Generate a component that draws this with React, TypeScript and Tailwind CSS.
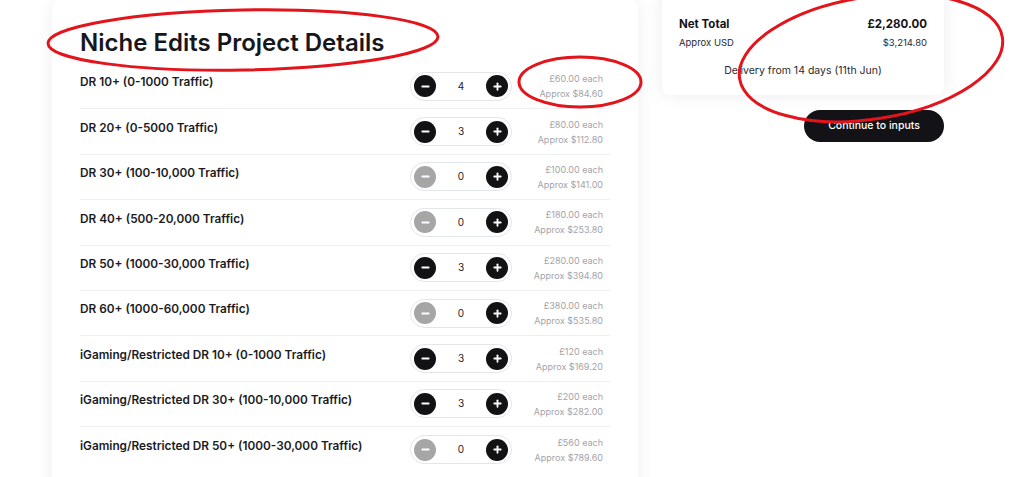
import { Minus, Plus } from "lucide-react";

type Item = {
  label: string;
  qty: number;
  each: string;
  approx: string;
};

const items: Item[] = [
  { label: "DR 10+ (0-1000 Traffic)", qty: 4, each: "£60.00 each", approx: "Approx $84.60" },
  { label: "DR 20+ (0-5000 Traffic)", qty: 3, each: "£80.00 each", approx: "Approx $112.80" },
  { label: "DR 30+ (100-10,000 Traffic)", qty: 0, each: "£100.00 each", approx: "Approx $141.00" },
  { label: "DR 40+ (500-20,000 Traffic)", qty: 0, each: "£180.00 each", approx: "Approx $253.80" },
  { label: "DR 50+ (1000-30,000 Traffic)", qty: 3, each: "£280.00 each", approx: "Approx $394.80" },
  { label: "DR 60+ (1000-60,000 Traffic)", qty: 0, each: "£380.00 each", approx: "Approx $535.80" },
  { label: "iGaming/Restricted DR 10+ (0-1000 Traffic)", qty: 3, each: "£120 each", approx: "Approx $169.20" },
  { label: "iGaming/Restricted DR 30+ (100-10,000 Traffic)", qty: 3, each: "£200 each", approx: "Approx $282.00" },
  { label: "iGaming/Restricted DR 50+ (1000-30,000 Traffic)", qty: 0, each: "£560 each", approx: "Approx $789.60" },
];

function Stepper({ qty }: { qty: number }) {
  return (
    <div className="flex h-[29px] w-[102px] items-center justify-between rounded-full border-[1.5px] border-[#e2e5eb] px-[3px]">
      <span
        className={
          qty === 0
            ? "flex h-[22px] w-[22px] items-center justify-center rounded-full bg-[#a6a6a6]"
            : "flex h-[22px] w-[22px] items-center justify-center rounded-full bg-[#121215]"
        }
      >
        <Minus size={11} strokeWidth={4} className="text-white" />
      </span>
      <span className="text-[10px] text-[#222]">{qty}</span>
      <span className="flex h-[22px] w-[22px] items-center justify-center rounded-full bg-[#121215]">
        <Plus size={11} strokeWidth={4} className="text-white" />
      </span>
    </div>
  );
}

function ItemRow({ item }: { item: Item }) {
  return (
    <div className="flex h-[45.4px] items-center border-b border-[#eef0f3] last:border-b-0">
      <span className="flex-1 pb-[6px] text-[11.8px] font-semibold text-[#1b1b1f]">{item.label}</span>
      <Stepper qty={item.qty} />
      <div className="ml-[14px] flex w-[84px] flex-col items-end pr-[7px] text-[9px] leading-[15px] text-[#a3a3a8]">
        <span>{item.each}</span>
        <span>{item.approx}</span>
      </div>
    </div>
  );
}

function Annotations() {
  return (
    <svg className="pointer-events-none absolute left-0 top-0" width="1024" height="477" viewBox="0 0 1024 477">
      <g fill="none" stroke="#e3141b" strokeWidth="3">
        <ellipse cx="243" cy="40" rx="195" ry="30" transform="rotate(-1 243 40)" />
        <ellipse cx="580" cy="82" rx="61" ry="25" />
        <ellipse cx="871" cy="58" rx="133" ry="61" transform="rotate(-9 871 58)" />
      </g>
    </svg>
  );
}

export default function App() {
  return (
    <div className="relative h-[477px] w-full overflow-hidden bg-white font-['Inter',sans-serif]">
      <div className="flex items-start gap-[24px] pl-[52px]">
        <div className="w-[586px] rounded-lg bg-white px-[28px] pb-[40px] pt-[29px] shadow-[0_0_18px_rgba(20,30,60,0.07)]">
          <h1 className="mb-[7px] text-[24px] font-semibold leading-[28px] text-[#17171b]">
            Niche Edits Project Details
          </h1>
          <div className="flex flex-col">
            {items.map((it) => (
              <ItemRow key={it.label} item={it} />
            ))}
          </div>
        </div>

        <div className="flex w-[282px] flex-col items-end">
          <div className="-mt-[10px] w-full rounded-lg bg-white px-[17px] pb-[17px] pt-[27px] shadow-[0_0_18px_rgba(20,30,60,0.08)]">
            <div className="flex h-[15px] items-center justify-between text-[11.5px] font-bold text-[#141418]">
              <span>Net Total</span>
              <span>£2,280.00</span>
            </div>
            <div className="mt-[4px] flex h-[14px] items-center justify-between text-[9.5px] text-[#2a2a2e]">
              <span>Approx USD</span>
              <span>$3,214.80</span>
            </div>
            <div className="mt-[13px] h-[15px] text-center text-[10.5px] leading-[15px] text-[#2a2a2e]">
              Delivery from 14 days (11th Jun)
            </div>
          </div>
          <button className="mt-[15px] h-[32px] w-[140px] rounded-full bg-[#131317] text-[10.5px] font-medium text-white">
            Continue to inputs
          </button>
        </div>
      </div>
      <Annotations />
    </div>
  );
}
